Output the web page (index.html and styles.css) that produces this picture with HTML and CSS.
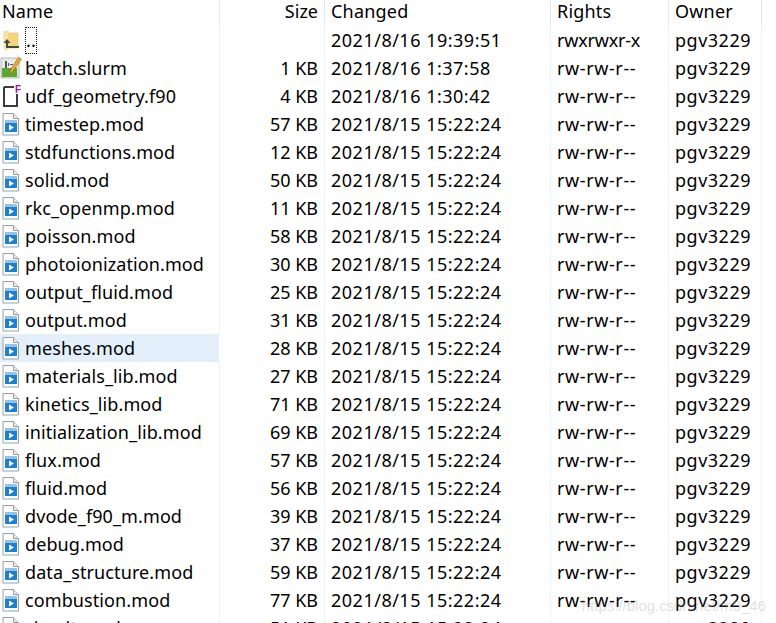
FILE: index.html
```html
<!DOCTYPE html>
<html lang="en">
<head>
    <meta charset="UTF-8">
    <title>Remote files</title>
    <link rel="stylesheet" href="styles.css">
</head>
<body>
    <svg class="defs" width="0" height="0">
        <symbol id="mod" viewBox="0 0 18 24">
            <path d="M1 1.5h10.5l5 5V23H1z" fill="#fff" stroke="#9a9fa5"/>
            <path d="M11.5 1.5v5h5" fill="#e6e8ea" stroke="#9a9fa5"/>
            <rect x="3" y="8" width="12" height="12" fill="#1c7fd0"/>
            <rect x="3" y="8" width="12" height="3" fill="#8cc6ee"/>
            <path d="M7 12.5l5 3-5 3z" fill="#fff"/>
        </symbol>
    </svg>
    <div class="list">
        <div class="row head">
            <div class="name">Name</div>
            <div class="size">Size</div>
            <div class="changed">Changed</div>
            <div class="rights">Rights</div>
            <div class="owner">Owner</div>
            <div class="rest"></div>
        </div>
        <div class="row">
            <div class="name">
                <svg class="icon" viewBox="0 0 18 24">
                    <path d="M2 4l4-1 1 2h9v15H2z" fill="#f7d57e" stroke="#e8c46a" stroke-width=".6"/>
                    <path d="M2 5l4-2v19l-4 1z" fill="#fbe3a0"/>
                    <path d="M4 20v-6h2v4h11v2z" fill="#3d4a4a"/>
                    <path d="M5 11l3.5 4h-7z" fill="#3d4a4a"/>
                </svg>
                <span class="up">..</span>
            </div>
            <div class="size"></div>
            <div class="changed">2021/8/16 19:39:51</div>
            <div class="rights exec">rwxrwxr-x</div>
            <div class="owner">pgv3229</div>
            <div class="rest"></div>
        </div>
        <div class="row">
            <div class="name">
                <svg class="icon" viewBox="0 0 18 24">
                    <path d="M-1 2h15l3 3v17H-1z" fill="#e9ebe6" stroke="#a8aca6" stroke-width=".8"/>
                    <rect x="0" y="12" width="15" height="9" fill="#58a832"/>
                    <path d="M3 5h2v7H3zM6 7h1v3H6zM8 8h3v1H8z" fill="#555"/>
                    <path d="M16.5 1l3 2-9 13-3 2 1-4z" fill="#eda92c" stroke="#8a5a14" stroke-width=".5"/>
                </svg>
                batch.slurm
            </div>
            <div class="size">1 KB</div>
            <div class="changed">2021/8/16 1:37:58</div>
            <div class="rights">rw-rw-r--</div>
            <div class="owner">pgv3229</div>
            <div class="rest"></div>
        </div>
        <div class="row">
            <div class="name">
                <svg class="icon" viewBox="0 0 18 24">
                    <path d="M2 3h10M15 10v12H2V3" fill="none" stroke="#3c3c3c" stroke-width="2"/>
                    <text class="f-mark" x="13" y="8.5">F</text>
                </svg>
                udf_geometry.f90
            </div>
            <div class="size">4 KB</div>
            <div class="changed">2021/8/16 1:30:42</div>
            <div class="rights">rw-rw-r--</div>
            <div class="owner">pgv3229</div>
            <div class="rest"></div>
        </div>
        <div id="rows"></div>
    </div>
    <div class="mark">https://blog.csdn.net/m0_46</div>
    <script src="list.js"></script>
</body>
</html>
```

FILE: list.js
```js
const files = [
    ['timestep.mod', '57 KB'],
    ['stdfunctions.mod', '12 KB'],
    ['solid.mod', '50 KB'],
    ['rkc_openmp.mod', '11 KB'],
    ['poisson.mod', '58 KB'],
    ['photoionization.mod', '30 KB'],
    ['output_fluid.mod', '25 KB'],
    ['output.mod', '31 KB'],
    ['meshes.mod', '28 KB'],
    ['materials_lib.mod', '27 KB'],
    ['kinetics_lib.mod', '71 KB'],
    ['initialization_lib.mod', '69 KB'],
    ['flux.mod', '57 KB'],
    ['fluid.mod', '56 KB'],
    ['dvode_f90_m.mod', '39 KB'],
    ['debug.mod', '37 KB'],
    ['data_structure.mod', '59 KB'],
    ['combustion.mod', '77 KB'],
    ['circuit.mod', '51 KB']
];

const rows = document.getElementById('rows');

files.forEach(file => {
    const row = document.createElement('div');
    row.className = file[0] === 'meshes.mod' ? 'row selected' : 'row';
    row.innerHTML = `
        <div class="name"><svg class="icon"><use href="#mod"></use></svg>${file[0]}</div>
        <div class="size">${file[1]}</div>
        <div class="changed">2021/8/15 15:22:24</div>
        <div class="rights">rw-rw-r--</div>
        <div class="owner">pgv3229</div>
        <div class="rest"></div>`;
    rows.appendChild(row);
});
```

FILE: styles.css
```css
html, body {
    height: 100%;
}
body {
    margin: 0;
    background: #fff;
    color: #000;
    font-family: 'Noto Sans', sans-serif;
    font-size: 18px;
    overflow: hidden;
    position: relative;
}
.defs {
    display: none;
}
.row {
    display: grid;
    grid-template-columns: 220px 105px 226px 118px 93px 14px;
    height: 28px;
    line-height: 28px;
    white-space: nowrap;
}
.row > div {
    border-right: 1px solid #eef4fc;
    box-sizing: border-box;
}
.head {
    height: 26px;
    line-height: 22px;
}
.head > div {
    border-right-color: #e4e6e9;
}
.row > .rest {
    border-right: none;
}
.name {
    display: flex;
    align-items: center;
    gap: 5px;
    padding-left: 2px;
    letter-spacing: 0.1px;
}
.head .name {
    align-items: flex-start;
}
.icon {
    width: 18px;
    height: 24px;
    flex: none;
    overflow: visible;
}
.size {
    text-align: right;
    padding-right: 6px;
}
.changed {
    padding-left: 6px;
    letter-spacing: 0.5px;
}
.rights {
    padding-left: 6px;
    letter-spacing: 0.6px;
}
.rights.exec {
    letter-spacing: -0.2px;
}
.owner {
    padding-left: 6px;
    letter-spacing: 0.5px;
}
.head .changed, .head .rights, .head .owner {
    letter-spacing: 0.2px;
}
.selected .name {
    background: #e3f0fc;
    margin-right: 1px;
    border-right: none;
}
.up {
    border: 1px dotted #111;
    height: 25px;
    width: 10px;
    line-height: 24px;
    text-align: center;
}
.f-mark {
    font-family: 'Liberation Sans', sans-serif;
    font-size: 10px;
    font-weight: 700;
    fill: #a0109a;
}
.mark {
    position: absolute;
    right: 10px;
    bottom: 9px;
    color: rgba(150, 150, 150, 0.3);
    font-family: 'Liberation Sans', sans-serif;
    font-size: 15px;
}
```
